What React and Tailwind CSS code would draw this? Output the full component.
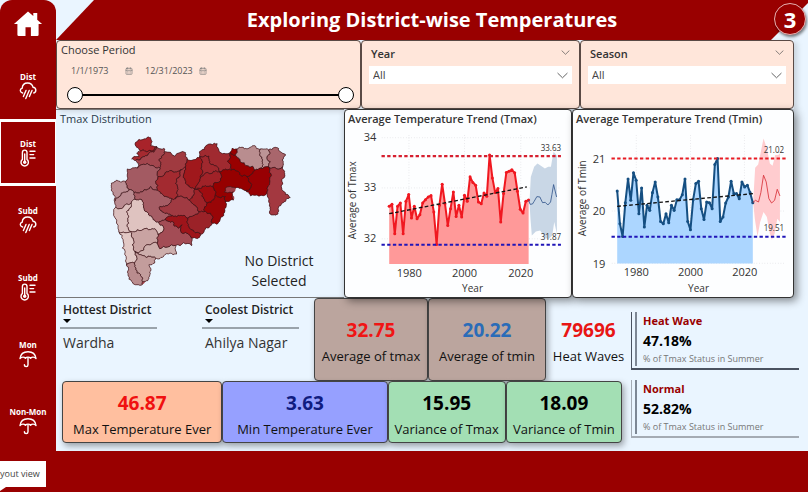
import React, { useState } from "react";
import { CalendarDays } from "lucide-react";

const FONT = "font-['Open_Sans','Noto_Sans',sans-serif]";

/* ---------- icons ---------- */

function HomeIcon() {
  return (
    <svg viewBox="0 0 30 27" className="h-[26px] w-[30px]" fill="#fff" aria-hidden="true">
      <path d="M15 0.5 L20.5 5.3 V2.2 H24.6 V9 L29.6 13.6 H26 V24.6 Q26 26 24.6 26 H18 V16.8 H12.4 V26 H5.4 Q4 26 4 24.6 V13.6 H0.4 Z" />
    </svg>
  );
}

function RainIcon() {
  return (
    <svg viewBox="0 0 18 18" className="h-[18px] w-[18px]" fill="none" stroke="#fff" strokeWidth="1.4" strokeLinecap="round" aria-hidden="true">
      <path d="M3.6 11 C0.9 10.4 0.3 7.2 3.2 6.2 C3.4 2.8 5.8 1 8.6 1 C11.4 1 13.4 2.6 14 5.2 C17.4 5.6 17.8 9.8 14.8 11" />
      <path d="M7 8.4 L4.4 14.6 M10.2 8.4 L6.8 16.6 M13 8.4 L10.4 14.6" />
    </svg>
  );
}

function ThermoIcon() {
  return (
    <svg viewBox="0 0 18 18" className="h-[18px] w-[18px]" fill="none" stroke="#fff" strokeWidth="1.4" strokeLinecap="round" aria-hidden="true">
      <path d="M3.4 10.4 V3.4 A2.3 2.3 0 0 1 8 3.4 V10.4 A3.7 3.7 0 1 1 3.4 10.4 Z" />
      <circle cx="5.7" cy="13.2" r="1.7" fill="#fff" stroke="none" />
      <path d="M5.7 5 V13" />
      <path d="M11 2.2 H16 M11 5.6 H14.6 M11 9 H16" />
    </svg>
  );
}

function UmbrellaIcon() {
  return (
    <svg viewBox="0 0 18 18" className="h-[18px] w-[18px]" fill="none" stroke="#fff" strokeWidth="1.4" strokeLinecap="round" strokeLinejoin="round" aria-hidden="true">
      <path d="M1 8.6 C1.6 4 5 1.8 9 1.8 C13 1.8 16.4 4 17 8.6 C15.2 6.6 12.8 6.8 11.6 8.2 C10.2 6.8 7.8 6.8 6.4 8.2 C5.2 6.8 2.8 6.6 1 8.6 Z" />
      <path d="M9 7.6 V14.8 A1.8 1.8 0 0 1 5.4 14.8" />
    </svg>
  );
}

function Chevron({ className }) {
  return (
    <svg viewBox="0 0 12 7" className={className} fill="none" stroke="#555" strokeWidth="1" aria-hidden="true">
      <path d="M0.6 0.8 L6 6 L11.4 0.8" />
    </svg>
  );
}

/* ---------- sidebar ---------- */

const NAV = [
  { id: "dist-rain", label: "Dist", Icon: RainIcon },
  { id: "dist-temp", label: "Dist", Icon: ThermoIcon },
  { id: "subd-rain", label: "Subd", Icon: RainIcon },
  { id: "subd-temp", label: "Subd", Icon: ThermoIcon },
  { id: "mon", label: "Mon", Icon: UmbrellaIcon },
  { id: "non-mon", label: "Non-Mon", Icon: UmbrellaIcon },
];

function Sidebar() {
  const [active, setActive] = useState("dist-temp");
  return (
    <aside className="flex w-14 shrink-0 flex-col rounded-t-xl bg-[#990000]">
      <button type="button" aria-label="Home" className="flex h-[52px] items-center justify-center pb-1">
        <HomeIcon />
      </button>
      <nav className="flex flex-col">
        {NAV.map(({ id, label, Icon }) => (
          <button
            key={id}
            type="button"
            onClick={() => setActive(id)}
            className={
              "flex h-[67px] flex-col items-center border-x border-y-[3px] pt-4 last:h-[60px] " +
              (id === active ? "border-white" : "border-transparent")
            }
          >
            <span className="text-[8px] leading-[11px] font-bold text-white">{label}</span>
            <Icon />
          </button>
        ))}
      </nav>
    </aside>
  );
}

/* ---------- filters ---------- */

function DateField({ label, value }) {
  return (
    <div className="flex items-center gap-[6px]">
      <input aria-label={label} defaultValue={value} className="w-12 bg-transparent text-[9px] leading-4 text-[#555]" />
      <CalendarDays className="h-2 w-2 text-[#777]" aria-hidden="true" />
    </div>
  );
}

const THUMB =
  "pointer-events-none col-start-1 row-start-1 h-4 w-full appearance-none bg-transparent " +
  "[&::-webkit-slider-thumb]:pointer-events-auto [&::-webkit-slider-thumb]:h-4 [&::-webkit-slider-thumb]:w-4 " +
  "[&::-webkit-slider-thumb]:appearance-none [&::-webkit-slider-thumb]:rounded-full [&::-webkit-slider-thumb]:border " +
  "[&::-webkit-slider-thumb]:border-black [&::-webkit-slider-thumb]:bg-white";

function PeriodFilter() {
  return (
    <section className="flex flex-col rounded-sm border border-[#5a4a45] bg-[#ffe6da] pl-1">
      <h2 className="text-[11px] leading-[18px] text-[#333]">Choose Period</h2>
      <div className="flex gap-3 pt-1 pl-[10px]">
        <DateField label="From" value="1/1/1973" />
        <DateField label="To" value="12/31/2023" />
      </div>
      <div className="mt-2 mr-[6px] ml-[6px] grid items-center">
        <div className="col-start-1 row-start-1 mx-2 h-[2px] bg-black" />
        <input type="range" aria-label="Period start" min="1973" max="2023" defaultValue="1973" className={THUMB} />
        <input type="range" aria-label="Period end" min="1973" max="2023" defaultValue="2023" className={THUMB} />
      </div>
    </section>
  );
}

function SelectFilter({ id, label }) {
  return (
    <section className="flex flex-col rounded-sm border border-[#5a4a45] bg-[#ffe6da] px-[7px] pt-1">
      <div className="flex items-center justify-between px-[2px]">
        <label htmlFor={id} className="text-[11px] leading-[18px] font-semibold text-[#333]">
          {label}
        </label>
        <Chevron className="mb-1 h-[5px] w-[9px]" />
      </div>
      <div className="mt-[3px] grid items-center">
        <select id={id} className="col-start-1 row-start-1 h-[18px] w-full appearance-none bg-white pl-1 text-[11px] leading-[18px] text-[#444]">
          <option>All</option>
        </select>
        <Chevron className="pointer-events-none col-start-1 row-start-1 mr-1 h-[7px] w-[11px] justify-self-end" />
      </div>
    </section>
  );
}

/* ---------- map ---------- */

// Every district: fill colour, then its corner points.
const OUTLINE =
  "105,42 130,32 150,28 155,40 150,52 168,55 190,60 192,70 255,73 260,92 290,88 298,85 297,70 320,50 350,46 355,65 390,72 395,60 410,62 440,62 460,52 482,62 505,65 525,57 540,70 555,78 545,95 547,115 553,130 548,150 545,185 570,208 555,220 535,235 532,258 510,258 507,230 505,210 500,195 450,203 435,187 405,180 400,215 375,222 370,262 348,288 335,285 315,300 300,318 298,325 275,330 273,353 225,352 228,378 190,383 165,390 162,405 145,410 148,440 135,460 125,470 95,462 82,440 78,412 65,360 55,312 52,300 45,237 42,220 35,190 32,165 48,155 60,162 75,160 80,130 80,122 110,120 115,105 93,92 115,85 108,75 120,68 108,57";

const DISTRICTS = [
  ["#a8232a", "105,42 130,32 150,28 155,40 150,52 168,55 140,70 120,68 108,57"],
  ["#a52a30", "93,92 115,85 108,75 120,68 140,70 168,55 160,72 135,82 118,95 105,97"],
  ["#a3464e", "105,97 118,95 135,82 160,72 168,55 190,60 192,70 182,90 175,95 178,118 150,112 110,120 115,105"],
  ["#a03a40", "192,70 255,73 260,92 255,115 240,125 215,128 190,140 172,145 178,118 175,95 182,90"],
  ["#a35a62", "80,122 110,120 150,112 178,118 172,145 165,160 170,185 150,175 130,185 100,193 85,185 75,160 80,130"],
  ["#bc9096", "32,165 48,155 60,162 75,160 85,185 75,192 55,205 42,220 35,190"],
  ["#b98a90", "42,220 55,205 75,192 85,185 100,193 103,213 92,225 70,235 45,237"],
  ["#dbbfbd", "45,237 70,235 92,225 78,250 82,275 90,310 55,312 52,300"],
  ["#dfc3c0", "78,250 92,225 103,213 128,222 135,250 155,268 175,282 188,295 188,308 172,318 155,302 110,305 90,310 82,275"],
  ["#a55c64", "100,193 130,185 150,175 170,185 185,198 215,212 205,228 178,235 178,245 200,255 215,262 195,275 175,282 155,268 135,250 128,222 103,213"],
  ["#e2c8c5", "55,312 90,310 98,330 95,350 103,370 102,405 78,412 65,360"],
  ["#c9a3a2", "90,310 110,305 155,302 172,318 170,345 150,350 135,352 130,365 103,370 95,350 98,330"],
  ["#cdaeac", "103,370 130,365 135,352 150,350 170,345 178,362 225,352 228,378 190,383 165,390 150,385 125,382"],
  ["#c39d9c", "103,370 125,382 150,385 165,390 162,405 145,410 148,440 135,460 125,460 120,440 105,425 102,405"],
  ["#b98c8e", "78,412 102,405 105,425 120,440 125,460 125,470 95,462 82,440"],
  ["#a34c55", "172,318 188,308 188,295 175,282 195,275 215,280 235,300 245,290 245,315 275,330 273,353 225,352 178,362 170,345"],
  ["#a32a30", "165,160 172,145 190,140 215,128 240,125 238,145 225,165 230,190 225,212 215,212 185,198 170,185"],
  ["#a3343b", "240,125 255,115 252,130 255,165 270,178 283,182 280,200 268,217 225,212 230,190 225,165 238,145"],
  ["#a0181c", "260,92 290,88 298,85 302,120 300,150 290,170 283,182 270,178 255,165 252,130 255,115"],
  ["#a03a42", "178,235 205,228 215,212 225,212 268,217 280,230 295,250 280,262 262,270 240,262 215,262 200,255 178,245"],
  ["#9e141a", "195,275 215,262 240,262 262,270 265,295 275,305 300,318 298,325 275,330 245,315 245,290 235,300 215,280"],
  ["#9b2228", "262,270 280,262 295,250 312,250 330,255 335,285 315,300 300,318 275,305 265,295"],
  ["#9d2228", "283,182 295,185 305,205 320,225 312,250 295,250 280,230 268,217 280,200"],
  ["#9f0c10", "283,182 315,172 340,180 345,200 340,215 320,225 305,205 295,185"],
  ["#990507", "345,200 375,205 375,222 370,262 348,288 335,285 330,255 312,250 320,225 340,215"],
  ["#a0282e", "302,85 325,83 328,105 358,130 335,135 310,140 300,150 302,120 298,85"],
  ["#a02228", "300,150 310,140 335,135 358,130 358,160 340,165 340,180 315,172 283,182 290,170"],
  ["#a02a30", "298,85 297,70 320,50 350,46 355,65 390,72 393,125 380,125 358,130 328,105 325,83 302,85"],
  ["#960000", "358,130 380,125 393,125 410,128 440,145 452,165 450,180 435,187 405,180 375,180 372,192 398,190 400,215 375,222 375,205 345,200 340,180 340,165 358,160"],
  ["#990000", "390,72 405,80 420,100 440,112 465,125 450,140 440,145 410,128 393,125"],
  ["#990000", "390,72 395,60 410,62 405,80"],
  ["#b98d8f", "405,80 410,62 440,62 460,52 482,62 478,80 487,95 480,120 465,125 440,112 420,100"],
  ["#bc9496", "482,62 505,65 500,90 510,100 508,120 480,120 487,95 478,80"],
  ["#a9666c", "505,65 525,57 540,70 555,78 545,95 547,115 508,120 510,100 500,90"],
  ["#980003", "440,145 450,140 465,125 480,120 508,120 508,165 500,180 500,195 450,203 435,187 450,180 452,165"],
  ["#a33840", "508,120 547,115 553,130 548,150 545,185 570,208 555,220 535,235 532,258 510,258 507,230 505,210 500,195 500,180 508,165"],
];

// Breaks an edge in two with a sideways nudge; the nudge depends only on the
// edge's ends, so neighbours that share an edge share the same border.
function wiggle(a, b, depth) {
  const dx = b[0] - a[0];
  const dy = b[1] - a[1];
  const len = Math.hypot(dx, dy);
  if (depth === 0 || len < 5) return [a];
  const flip = a[0] + a[1] * 1.37 > b[0] + b[1] * 1.37 ? -1 : 1;
  const n = Math.sin((a[0] + b[0]) * 12.9 + (a[1] + b[1]) * 7.23) * 0.2 * flip;
  const m = [(a[0] + b[0]) / 2 - dy * n, (a[1] + b[1]) / 2 + dx * n];
  return [...wiggle(a, m, depth - 1), ...wiggle(m, b, depth - 1)];
}

function border(points) {
  const p = points.split(" ").map((s) => s.split(",").map(Number));
  return p
    .flatMap((a, i) => wiggle(a, p[(i + 1) % p.length], 3))
    .map(([x, y]) => x.toFixed(1) + "," + y.toFixed(1))
    .join(" ");
}

function DistrictMap() {
  return (
    <svg viewBox="20 20 560 460" className="h-[153px] w-[187px]" role="img" aria-label="Tmax by district">
      <polygon points={border(OUTLINE)} fill="#a04048" />
      {DISTRICTS.map(([fill, points], i) => (
        <polygon key={i} points={border(points)} fill={fill} stroke="#3a1418" strokeWidth="2" strokeLinejoin="round" />
      ))}
    </svg>
  );
}

/* ---------- charts ---------- */

// One reading a year, 1973 to 2023, as heights on the plot's grid.
const TMAX = [303, 297, 385, 303, 293, 385, 288, 268, 338, 303, 340, 328, 293, 283, 275, 271, 320, 417, 300, 237, 295, 360, 310, 260, 333, 300, 335, 270, 288, 215, 232, 240, 290, 295, 263, 273, 150, 218, 262, 250, 350, 265, 202, 198, 194, 203, 258, 312, 323, 288, 284];
const TMIN = [257, 355, 393, 292, 221, 285, 203, 225, 325, 248, 365, 300, 315, 262, 230, 275, 348, 355, 325, 352, 300, 315, 283, 283, 268, 221, 348, 373, 283, 235, 228, 310, 342, 290, 292, 310, 178, 160, 348, 335, 293, 275, 228, 265, 265, 280, 230, 245, 240, 262, 292];

function TrendChart({ c }) {
  const pts = c.data.map((y, i) => [c.x0 + i * c.step, y]);
  const line = pts.map((p) => p.join(",")).join(" ");
  const last = pts[pts.length - 1][0];
  return (
    <svg viewBox={c.viewBox} className="w-full" role="img" aria-label={c.title}>
      <g transform={c.plot}>
        <g stroke="#d4d4d8" strokeWidth="2" strokeDasharray="2 6">
          {c.rows.map((y) => (
            <line key={y} x1="125" x2={c.right} y1={y} y2={y} />
          ))}
          {c.cols.map((x) => (
            <line key={x} x1={x} x2={x} y1="90" y2="473" />
          ))}
        </g>
        <polygon points={`${c.x0},${c.base} ${line} ${last},${c.base}`} fill={c.area} />
        <polygon points={c.band} fill={c.bandFill} />
        <polyline points={line} fill="none" stroke={c.stroke} strokeWidth="6" strokeLinejoin="round" />
        {pts.map(([x, y]) => (
          <circle key={x} cx={x} cy={y} r="4.5" fill={c.stroke} />
        ))}
        <polyline points={c.forecast} fill="none" stroke={c.forecastStroke} strokeWidth="2.5" />
        <line {...c.trend} stroke="#111" strokeWidth="4" strokeDasharray="11 7" />
        <line x1="124" x2={c.right} y1={c.max} y2={c.max} stroke={c.maxStroke} strokeWidth="6" strokeDasharray="10 7" />
        <line x1="124" x2={c.right} y1={c.min} y2={c.min} stroke="#2016b8" strokeWidth="6" strokeDasharray="10 7" />
      </g>
      <g fill="#333" fontSize="11" textAnchor="middle">
        {c.labels.map(([t, x, y]) => (
          <text key={t} x={x} y={y}>{t}</text>
        ))}
        <text fontSize="10" x={c.xTitle[1]} y={c.xTitle[2]}>{c.xTitle[0]}</text>
        <text fontSize="8" x={c.maxLabel[1]} y={c.maxLabel[2]}>{c.maxLabel[0]}</text>
        <text fontSize="8" x={c.minLabel[1]} y={c.minLabel[2]}>{c.minLabel[0]}</text>
        <text fontSize="10" transform={c.yTitle[1]}>{c.yTitle[0]}</text>
      </g>
    </svg>
  );
}

const TMAX_CHART = {
  title: "Average Temperature Trend (Tmax)",
  viewBox: "345 128 225 168",
  plot: "translate(340 105) scale(0.33333)",
  data: TMAX, x0: 147, step: 8.33, base: 475, right: 660,
  rows: [98, 248, 400], cols: [206, 372, 540],
  area: "#ff9999", stroke: "#f01820",
  band: "566,290 570,215 580,185 590,175 600,182 612,190 622,185 630,185 638,140 648,152 648,385 640,350 634,390 622,402 612,395 598,375 585,378 573,390 569,340",
  bandFill: "#c9d7e6",
  forecast: "563,284 568,297 575,296 580,288 588,274 597,275 605,292 613,291 621,299 629,290 633,268 638,238 647,275",
  forecastStroke: "#33568c",
  trend: { x1: 147, y1: 325, x2: 558, y2: 245 },
  max: 153, maxStroke: "#d62030", min: 418,
  labels: [["34", 370, 141], ["33", 370, 191], ["32", 370, 242], ["1980", 409, 276], ["2000", 464, 276], ["2020", 520, 276]],
  xTitle: ["Year", 472, 291],
  maxLabel: ["33.63", 550, 151], minLabel: ["31.87", 550, 240],
  yTitle: ["Average of Tmax", "translate(356 200) rotate(-90)"],
};

const TMIN_CHART = {
  title: "Average Temperature Trend (Tmin)",
  viewBox: "573 128 219 168",
  plot: "translate(570 105) scale(0.33333)",
  data: TMIN, x0: 141, step: 8.1, base: 474, right: 645,
  rows: [161, 317, 473], cols: [198, 360, 521],
  area: "#acd6ff", stroke: "#154f82",
  band: "547,290 553,188 562,178 568,150 578,100 588,130 597,175 605,182 613,150 622,150 627,145 627,350 619,340 611,385 603,403 597,385 588,335 578,320 568,350 560,393 552,340",
  bandFill: "#ffcccf",
  forecast: "546,292 554,285 563,290 570,262 578,210 586,230 594,280 602,293 611,285 619,252 627,272",
  forecastStroke: "#d83038",
  trend: { x1: 141, y1: 303, x2: 547, y2: 265 },
  max: 160, maxStroke: "#e81c24", min: 394,
  labels: [["21", 599, 163], ["20", 599, 215], ["19", 599, 267], ["1980", 636, 275], ["2000", 690, 275], ["2020", 744, 275]],
  xTitle: ["Year", 698, 291],
  maxLabel: ["21.02", 773, 153], minLabel: ["19.51", 773, 231],
  yTitle: ["Average of Tmin", "translate(586 198) rotate(-90)"],
};

function ChartCard({ chart }) {
  return (
    <section className="z-10 rounded border border-[#333] bg-[#fdfeff] shadow-[3px_3px_8px_rgba(0,0,0,0.45)]">
      <h2 className="pl-[3px] text-[11px] leading-[18px] font-semibold whitespace-nowrap text-[#333]">{chart.title}</h2>
      <TrendChart c={chart} />
    </section>
  );
}

/* ---------- cards ---------- */

function TopDistrict({ heading, name }) {
  return (
    <table className="w-[97px] self-start text-left whitespace-nowrap">
      <thead>
        <tr>
          <th className="border-b-2 border-[#9aa3ab] px-[3px] pb-1 text-[12px] leading-[18px] font-semibold text-[#222]">
            {heading}
            <svg viewBox="0 0 8 4" className="h-1 w-2" aria-hidden="true">
              <path d="M0 0 H8 L4 4 Z" fill="#000" />
            </svg>
          </th>
        </tr>
      </thead>
      <tbody>
        <tr>
          <td className="px-[3px] pt-1 text-[14px] leading-5 text-[#333]">{name}</td>
        </tr>
      </tbody>
    </table>
  );
}

function StatCard({ value, label, className, valueClass }) {
  return (
    <div className={"flex flex-col items-center justify-center pt-2 whitespace-nowrap " + className}>
      <span className={"text-[19px] leading-[26px] font-bold " + valueClass}>{value}</span>
      <span className="text-[13px] leading-[26px] font-medium text-[#111]">{label}</span>
    </div>
  );
}

const BOX = "rounded-sm border border-[#444] shadow-[2px_3px_6px_rgba(0,0,0,0.35)] ";

function Kpi({ title, value, lineClass }) {
  return (
    <div className={"border-b-2 border-l pl-[3px] " + lineClass}>
      <div className="mb-[2px] border-l-2 border-[#7d8794] pl-[6px] whitespace-nowrap">
        <h3 className="text-[11px] leading-[18px] font-bold text-[#990000]">{title}</h3>
        <p className="text-[14px] leading-[22px] font-bold text-black">{value}</p>
        <p className="text-[9px] leading-[14px] text-[#777]">% of Tmax Status in Summer</p>
      </div>
    </div>
  );
}

/* ---------- page ---------- */

export default function App() {
  return (
    <div className={"flex min-h-screen flex-col bg-[#990000] " + FONT}>
      <div className="flex bg-[#eaf5ff]">
        <Sidebar />
        <main className="flex min-w-0 flex-1 flex-col">
          <header className="relative">
            <h1 className="bg-[#990000] text-center text-[20px] leading-10 font-bold text-white [clip-path:polygon(38px_0,100%_0,100%_3px,calc(100%-37px)_100%,0_100%)]">
              Exploring District-wise Temperatures
            </h1>
            <span className="absolute top-[3px] right-[2px] flex h-8 w-8 items-center justify-center rounded-full border border-[#e8b0b0] bg-[#990000] text-[22px] font-bold text-white shadow-[1px_2px_3px_rgba(0,0,0,0.5)]">
              3
            </span>
          </header>

          <div className="mr-[14px] grid h-[69px] grid-cols-[305fr_219fr_214fr] shadow-[3px_2px_6px_rgba(0,0,0,0.15)]">
            <PeriodFilter />
            <SelectFilter id="year" label="Year" />
            <SelectFilter id="season" label="Season" />
          </div>

          <div className="mr-[14px] grid grid-cols-[288fr_228fr_222fr]">
            <section className="flex flex-col border-y border-[#777] pl-1">
              <h2 className="text-[11px] leading-[18px] font-medium text-[#2b3a4a]">Tmax Distribution</h2>
              <div className="flex flex-1">
                <div className="shrink-0 pt-[7px] pl-[47px]">
                  <DistrictMap />
                </div>
                <p className="-ml-[58px] w-[86px] self-end pb-[6px] text-center text-[14px] leading-5 text-[#222]">No District Selected</p>
              </div>
            </section>
            <ChartCard chart={TMAX_CHART} />
            <ChartCard chart={TMIN_CHART} />
          </div>

          <div className="grid grid-cols-[575fr_168fr] pr-[9px]">
            <div className="flex flex-col">
              <div className="grid h-[83px] grid-cols-[142fr_116fr_114fr_118fr_85fr]">
                <div className="pt-[3px] pl-1">
                  <TopDistrict heading="Hottest District" name="Wardha" />
                </div>
                <div className="pt-[3px] pl-1">
                  <TopDistrict heading="Coolest District" name="Ahilya Nagar" />
                </div>
                <StatCard value="32.75" label="Average of tmax" className={BOX + "bg-[#bba59e]"} valueClass="text-[#f01515]" />
                <StatCard value="20.22" label="Average of tmin" className={BOX + "bg-[#bba59e]"} valueClass="text-[#2a6cb8]" />
                <StatCard value="79696" label="Heat Waves" className="" valueClass="text-[#e81515]" />
              </div>
              <div className="mr-[9px] mb-[9px] ml-[6px] grid h-[61px] grid-cols-[160fr_165fr_118fr_116fr]">
                <StatCard value="46.87" label="Max Temperature Ever" className={BOX + "bg-[#ffbf9f]"} valueClass="text-[#f01010]" />
                <StatCard value="3.63" label="Min Temperature Ever" className={BOX + "bg-[#96a0ff]"} valueClass="text-[#101c80]" />
                <StatCard value="15.95" label="Variance of Tmax" className={BOX + "bg-[#a3dfb4]"} valueClass="text-black" />
                <StatCard value="18.09" label="Variance of Tmin" className={BOX + "bg-[#a3dfb4]"} valueClass="text-black" />
              </div>
            </div>
            <div className="flex flex-col gap-[10px] pt-[14px]">
              <Kpi title="Heat Wave" value="47.18%" lineClass="border-[#4a5260]" />
              <Kpi title="Normal" value="52.82%" lineClass="border-[#a4abb4]" />
            </div>
          </div>
        </main>
      </div>
      <footer className="flex flex-1 flex-col items-start pt-[10px]">
        <div className="h-[26px] bg-white pr-[6px] text-[9px] leading-[26px] text-[#444]">yout view</div>
        <svg viewBox="0 0 6 4" className="h-1 w-[6px]" aria-hidden="true">
          <path d="M0 0 H6 L0 4 Z" fill="#fff" />
        </svg>
      </footer>
    </div>
  );
}
